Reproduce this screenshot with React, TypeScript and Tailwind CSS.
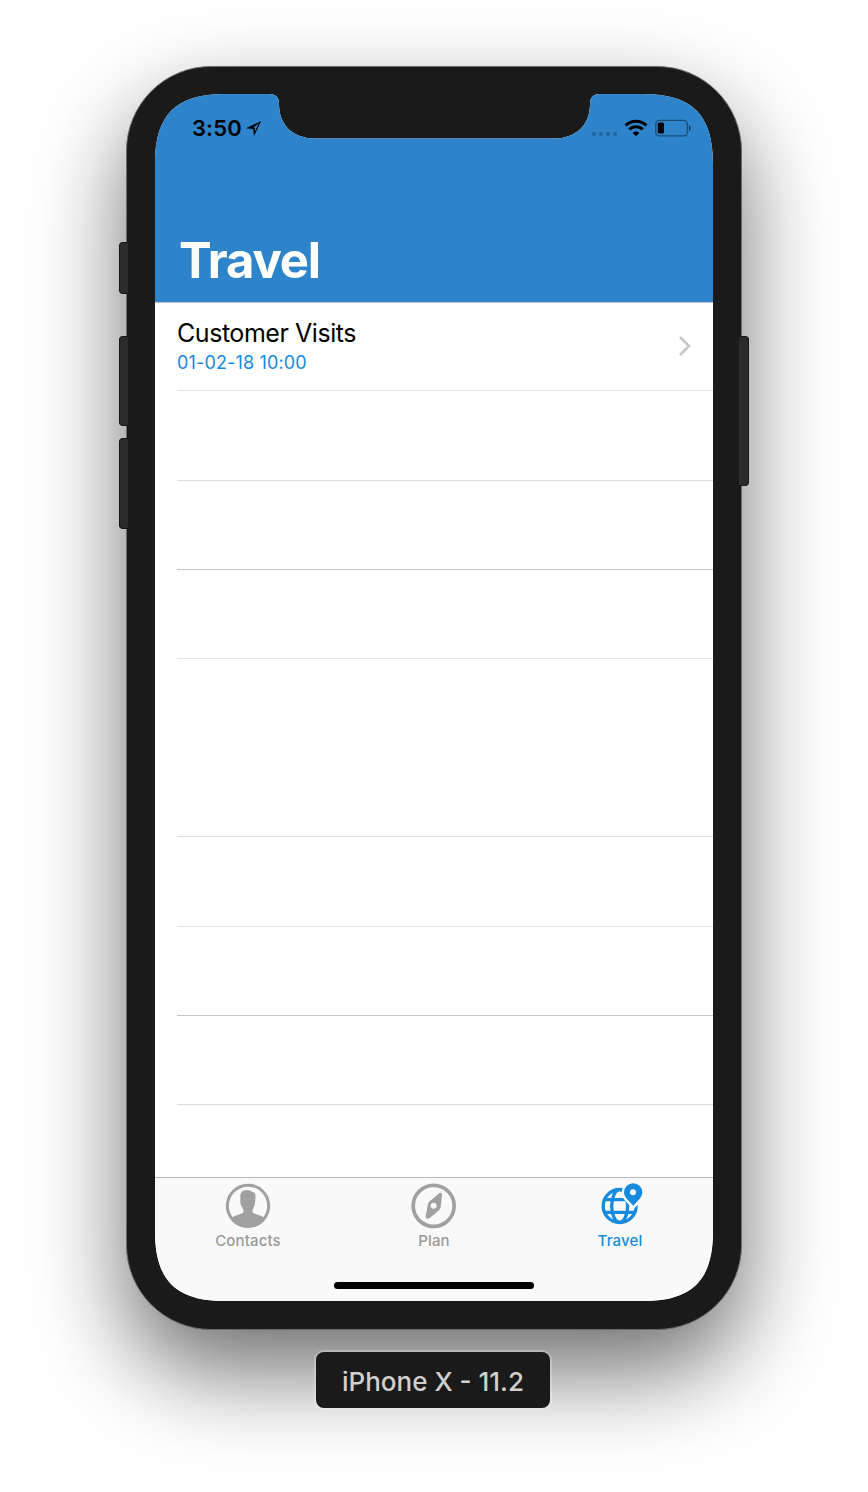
import type { ReactNode } from "react";

const rows = [
  { height: "h-[87px]", line: "bg-[#e3e3e4]" },
  { height: "h-[89px]", line: "bg-[#dcdcdd]" },
  { height: "h-[88px]", line: "bg-[#c8c7cc]" },
  { height: "h-[88px]", line: "bg-[#e3e3e4]" },
  { height: "h-[177px]", line: "bg-[#e0e0e2]" },
  { height: "h-[89px]", line: "bg-[#e3e3e4]" },
  { height: "h-[88px]", line: "bg-[#c8c7cc]" },
  { height: "h-[88px]", line: "bg-[#dadadc]" },
];

function LocationIcon() {
  return (
    <svg width="16" height="16" viewBox="0 0 16 16">
      <path fillRule="evenodd" d="M0 8.300 15.200.900 8 16 7.200 9.100ZM7.400 7.500 12.700 3.200 9.100 11.200 8.700 7.700Z" />
    </svg>
  );
}

function WifiIcon() {
  return (
    <svg width="24" height="18" viewBox="0 0 24 18">
      <g fill="none" stroke="#000" strokeWidth="3">
        <path d="M1.6 6.4a15 15 0 0 1 20.8 0" />
        <path d="M5.3 10.4a9.6 9.6 0 0 1 13.4 0" />
      </g>
      <path d="M12 17.2 8.7 13.9a4.7 4.7 0 0 1 6.6 0Z" />
    </svg>
  );
}

function BatteryIcon() {
  return (
    <svg width="37" height="18" viewBox="0 0 37 18">
      <rect x="0.8" y="1.3" width="31.6" height="15.6" rx="3.6" fill="none" stroke="#000" strokeOpacity=".42" strokeWidth="1.3" />
      <rect x="2.8" y="3.4" width="6.2" height="11.2" rx="1.6" />
      <path d="M34 6c2.400 1 2.400 5.200 0 6.200Z" fillOpacity=".5" />
    </svg>
  );
}

function ContactsIcon() {
  return (
    <svg width="48" height="48" viewBox="57 36 144 144">
      <circle cx="129" cy="107.500" r="62" fill="none" stroke="#a0a0a0" strokeWidth="9" />
      <path
        fill="#a0a0a0"
        d="M106 82C104 67 114 61 124 61C132 60 139 62 141 66C150 66 153 74 151 86L150 98C150 106 146 110 145 114C144 118 142 120 142 124C142 128 145 130 152 132C164 136 174 140 181 146C170 164 151 172 129 172C107 172 88 164 77 146C84 140 94 136 106 132C113 130 116 128 116 124C116 120 114 118 113 114C110 110 106 105 106 97Z"
      />
    </svg>
  );
}

function PlanIcon() {
  return (
    <svg width="48" height="48" viewBox="60 36 144 144">
      <circle cx="131" cy="107.500" r="61.500" fill="none" stroke="#a0a0a0" strokeWidth="11" />
      <path
        fill="#a0a0a0"
        fillRule="evenodd"
        d="M146 71C150 66 158 69 156 76L152 112C151 116 150 118 147 121L119 144C113 149 106 145 107 138L114 103C115 99 116 97 119 94ZM131 98a9 9 0 1 0 0 18 9 9 0 0 0 0-18Z"
      />
    </svg>
  );
}

function TravelIcon() {
  return (
    <svg width="48" height="48" viewBox="63 36 144 144">
      <g fill="none" stroke="#168ade" strokeWidth="10">
        <circle cx="134" cy="108" r="49.500" />
        <ellipse cx="134" cy="108" rx="24" ry="49" />
        <path d="M90 89h88M90 127h88" />
      </g>
      <path
        d="M174 41a28 28 0 0 0-27 28c0 15 15 25 28 39 13-14 27-24 27-39a28 28 0 0 0-28-28Z"
        fill="#f9f9f9"
        stroke="#f9f9f9"
        strokeWidth="14"
      />
      <path
        fill="#168ade"
        fillRule="evenodd"
        d="M174 40a27 27 0 0 0-27 27c0 15 14 25 28 40 14-15 27-25 27-40a27 27 0 0 0-28-27Zm0 18a9 9 0 1 1 0 18 9 9 0 0 1 0-18Z"
      />
    </svg>
  );
}

function Tab({ label, active, children }: { label: string; active?: boolean; children: ReactNode }) {
  return (
    <div className="flex flex-1 flex-col items-center pt-1">
      {children}
      <span
        className={
          active
            ? "mt-[2px] text-[15px] leading-[18px] font-medium tracking-[0.15px] text-[#168ade]"
            : "mt-[2px] text-[15px] leading-[18px] font-medium tracking-[0.15px] text-[#999999]"
        }
      >
        {label}
      </span>
    </div>
  );
}

export default function App() {
  return (
    <div className="flex h-[1492px] w-[868px] flex-col items-center overflow-hidden bg-white pt-[66px] font-['Inter',sans-serif]">
      <div className="relative h-[1264px] w-[616px] shrink-0">
        <div className="absolute top-[176px] -left-[7px] z-10 h-[52px] w-[9px] rounded-l-[4px] border border-r-0 border-[#171717] bg-[#2b2b2b]" />
        <div className="absolute top-[270px] -left-[7px] z-10 h-[90px] w-[9px] rounded-l-[4px] border border-r-0 border-[#171717] bg-[#2b2b2b]" />
        <div className="absolute top-[372px] -left-[7px] z-10 h-[91px] w-[9px] rounded-l-[4px] border border-r-0 border-[#171717] bg-[#2b2b2b]" />
        <div className="absolute top-[270px] -right-[7px] z-10 h-[150px] w-[10px] rounded-r-[4px] border border-l-0 border-[#171717] bg-[#2b2b2b]" />
        <div className="relative h-full rounded-[85px] border border-[#6b6b6b] bg-[#1a1a1a] px-[28px] pt-[27px] shadow-[0_42px_92px_rgba(0,0,0,0.56)]">
          <div className="flex h-[1207px] w-[558px] flex-col bg-white [clip-path:path('M0_70C0_20.7_20.7_0_70_0H115Q124_0_124_10C124_31_138_44.5_160_44.5H399C421_44.5_435_31_435_10Q435_0_444_0H488C537.3_0_558_20.7_558_70V1137C558_1186.3_537.3_1207_488_1207H70C20.7_1207_0_1186.3_0_1137Z')]">
            <header className="flex h-[208px] shrink-0 flex-col bg-[#2d84ca]">
              <div className="flex h-[68px] items-center justify-between pr-[21px] pl-[37px]">
                <div className="flex items-center gap-1">
                  <span className="text-[22px] leading-7 font-semibold tracking-[0.1px] text-black">3:50</span>
                  <LocationIcon />
                </div>
                <div className="flex items-center">
                  <div className="mt-[11px] mr-[7px] flex gap-[3px]">
                    <i className="size-1 rounded-[1px] bg-black/20" />
                    <i className="size-1 rounded-[1px] bg-black/20" />
                    <i className="size-1 rounded-[1px] bg-black/20" />
                    <i className="size-1 rounded-[1px] bg-black/20" />
                  </div>
                  <WifiIcon />
                  <span className="w-[7px]" />
                  <BatteryIcon />
                </div>
              </div>
              <h1 className="mt-[69px] pl-6 text-[49px] leading-[60px] font-bold tracking-[-1.150px] text-white">Travel</h1>
            </header>
            <div className="h-px shrink-0 bg-[#c4c4c6]" />
            <main className="flex flex-1 flex-col pl-[22px]">
              {rows.map((row, index) => (
                <div key={index} className="shrink-0">
                  <div className={row.height}>
                    {index === 0 && (
                      <div className="flex h-full items-start justify-between pt-[14px] pr-[21px]">
                        <div>
                          <div className="text-[25px] leading-8 tracking-[-0.450px] text-black">Customer Visits</div>
                          <div className="text-[18px] leading-7 tracking-[0.150px] text-[#168ade]">01-02-18 10:00</div>
                        </div>
                        <svg className="mt-[18px]" width="14" height="22" viewBox="0 0 14 22" fill="none">
                          <path d="m2 2 9 9-9 9" stroke="#c7c7cc" strokeWidth="2.600" />
                        </svg>
                      </div>
                    )}
                  </div>
                  <div className={`h-px ${row.line}`} />
                </div>
              ))}
            </main>
            <div className="h-px shrink-0 bg-[#b8b8b8]" />
            <nav className="flex h-[123px] shrink-0 flex-col items-center bg-[#f9f9f9]">
              <div className="flex h-[104px] w-full">
                <Tab label="Contacts"><ContactsIcon /></Tab>
                <Tab label="Plan"><PlanIcon /></Tab>
                <Tab label="Travel" active><TravelIcon /></Tab>
              </div>
              <div className="h-[7px] w-[200px] rounded-full bg-black" />
            </nav>
          </div>
        </div>
      </div>
      <div className="relative mt-[22px] mr-[2px] flex h-14 w-[234px] shrink-0 items-center justify-center rounded-[8px] bg-[#1a1a1a] text-[26px] font-medium text-[#d0d0d0] shadow-[0_0_0_2px_rgba(255,255,255,0.25)]">
        <span className="pt-[2px]">iPhone X - 11.2</span>
      </div>
    </div>
  );
}
